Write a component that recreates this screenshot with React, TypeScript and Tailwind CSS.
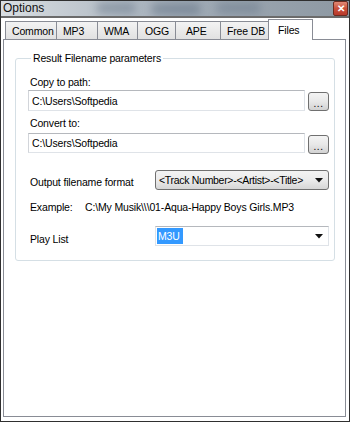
const tabs = [
  { label: "Common", cls: "w-[52px] pl-[6px]" },
  { label: "MP3", cls: "w-[42px] pl-[6px]" },
  { label: "WMA", cls: "w-[41px] pl-[6px]" },
  { label: "OGG", cls: "w-[39px] pl-[7px]" },
  { label: "APE", cls: "w-[46px] pl-[10px]" },
  { label: "Free DB", cls: "w-[49px] pl-[6px]" },
];

const Arrow = () => (
  <svg width="8" height="5" viewBox="0 0 8 5" className="shrink-0">
    <path d="M0 0 H8 L4 4.5 Z" fill="#111" />
  </svg>
);

const BrowseButton = () => (
  <div className="ml-[3px] mt-[2px] w-[21px] h-[19px] rounded-[3px] border border-[#707070] bg-gradient-to-b from-[#f4f4f4] via-[#e8e8e8] to-[#d2d2d2] flex items-end justify-center pb-[1px] text-[10px] leading-[10px] tracking-[0.5px]">
    ...
  </div>
);

const PathBox = ({ value, h }: { value: string; h: string }) => (
  <div className="flex items-start">
    <div
      className={`flex-1 ${h} bg-white border border-[#dfe3e8] border-t-[#b5b8bd] border-l-[#d2d5da] flex items-center pl-[3px]`}
    >
      {value}
    </div>
    <BrowseButton />
  </div>
);

export default function App() {
  return (
    <div className="w-[350px] h-[422px] bg-white border border-[#2f2f2f] flex flex-col text-[10.5px] leading-[14px] tracking-[-0.15px] text-black font-['Liberation_Sans',Arial,sans-serif] overflow-hidden whitespace-nowrap">
      {/* title bar */}
      <div className="h-[15px] shrink-0 flex items-start justify-between bg-gradient-to-r from-[#d9dee2] via-[#a2adb8] to-[#8d98a2] relative overflow-hidden">
        <div className="absolute left-[95px] top-[1px] w-[40px] h-[12px] rounded-full bg-[#55667a]/40 blur-[4px]" />
        <div className="absolute left-[150px] top-[2px] w-[50px] h-[12px] rounded-full bg-[#4e5f72]/40 blur-[4px]" />
        <div className="absolute left-[215px] top-[1px] w-[45px] h-[12px] rounded-full bg-[#56677a]/35 blur-[4px]" />
        <span className="relative pl-[2px] pt-[1px] text-[12px] leading-[13px] tracking-normal text-[#111]">
          Options
        </span>
        <div className="relative mr-[1px] w-[15px] h-[15px] rounded-[2px] border border-[#6d2b20] bg-gradient-to-b from-[#e08a76] via-[#c9503b] to-[#b8382a] flex items-center justify-center text-white text-[10px] leading-[10px] font-bold">
          ✕
        </div>
      </div>
      <div className="h-[2px] shrink-0 bg-[#6b6b6b]" />

      {/* body */}
      <div className="flex-1 flex flex-col pl-[2px] pr-[3px] pb-[4px]">
        {/* tabs */}
        <div className="h-[21px] shrink-0 flex items-end pl-[2px] relative z-10">
          {tabs.map((t, i) => (
            <div
              key={t.label}
              className={`${t.cls} ${i > 0 ? "-ml-px" : ""} h-[18px] border border-b-0 border-[#898c95] bg-gradient-to-b from-[#f3f3f3] to-[#e1e1e1] flex items-center`}
            >
              {t.label}
            </div>
          ))}
          <div className="-ml-px w-[45px] h-[21px] border border-b-0 border-[#898c95] bg-white flex items-start pt-[3px] pl-[9px] -mb-px">
            Files
          </div>
        </div>

        {/* tab panel */}
        <div className="flex-1 border border-[#898c95] bg-white">
          <fieldset className="mt-[12px] ml-[11px] mr-[10px] border border-[#d5dfe5] rounded-[3px] pl-[12px] pr-[5px] pb-[14px]">
            <legend className="ml-[3px] px-[2px] leading-[13px]">
              Result Filename parameters
            </legend>

            <div className="mt-[10px] pl-[2px]">Copy to path:</div>
            <div className="mt-[1px]">
              <PathBox value="C:\Users\Softpedia" h="h-[21px]" />
            </div>

            <div className="mt-[5px] pl-[2px]">Convert to:</div>
            <div className="mt-[3px]">
              <PathBox value="C:\Users\Softpedia" h="h-[20px]" />
            </div>

            <div className="mt-[16px] flex items-start">
              <div className="w-[127px] pl-[2px] mt-[5px]">
                Output filename format
              </div>
              <div className="flex-1 h-[20px] rounded-[3px] border border-[#707070] bg-gradient-to-b from-[#f3f3f3] via-[#ebebeb] to-[#d6d6d6] flex items-center justify-between pl-[3px] pr-[5px]">
                <span className="tracking-[-0.3px]">&lt;Track Number&gt;-&lt;Artist&gt;-&lt;Title&gt;</span>
                <Arrow />
              </div>
            </div>

            <div className="mt-[10px] flex pl-[2px]">
              <span className="w-[55px]">Example:</span>
              <span>C:\My Musik\\\01-Aqua-Happy Boys Girls.MP3</span>
            </div>

            <div className="mt-[12px] flex items-start">
              <div className="w-[127px] pl-[2px] mt-[6px]">Play List</div>
              <div className="flex-1 h-[20px] bg-white border border-[#dfe3e8] border-t-[#b5b8bd] flex items-center justify-between pl-[1px] pr-[5px]">
                <span className="bg-[#3399ff] text-white px-[1px] w-[26px] h-[16px] leading-[16px]">
                  M3U
                </span>
                <Arrow />
              </div>
            </div>
          </fieldset>
        </div>
      </div>
    </div>
  );
}
